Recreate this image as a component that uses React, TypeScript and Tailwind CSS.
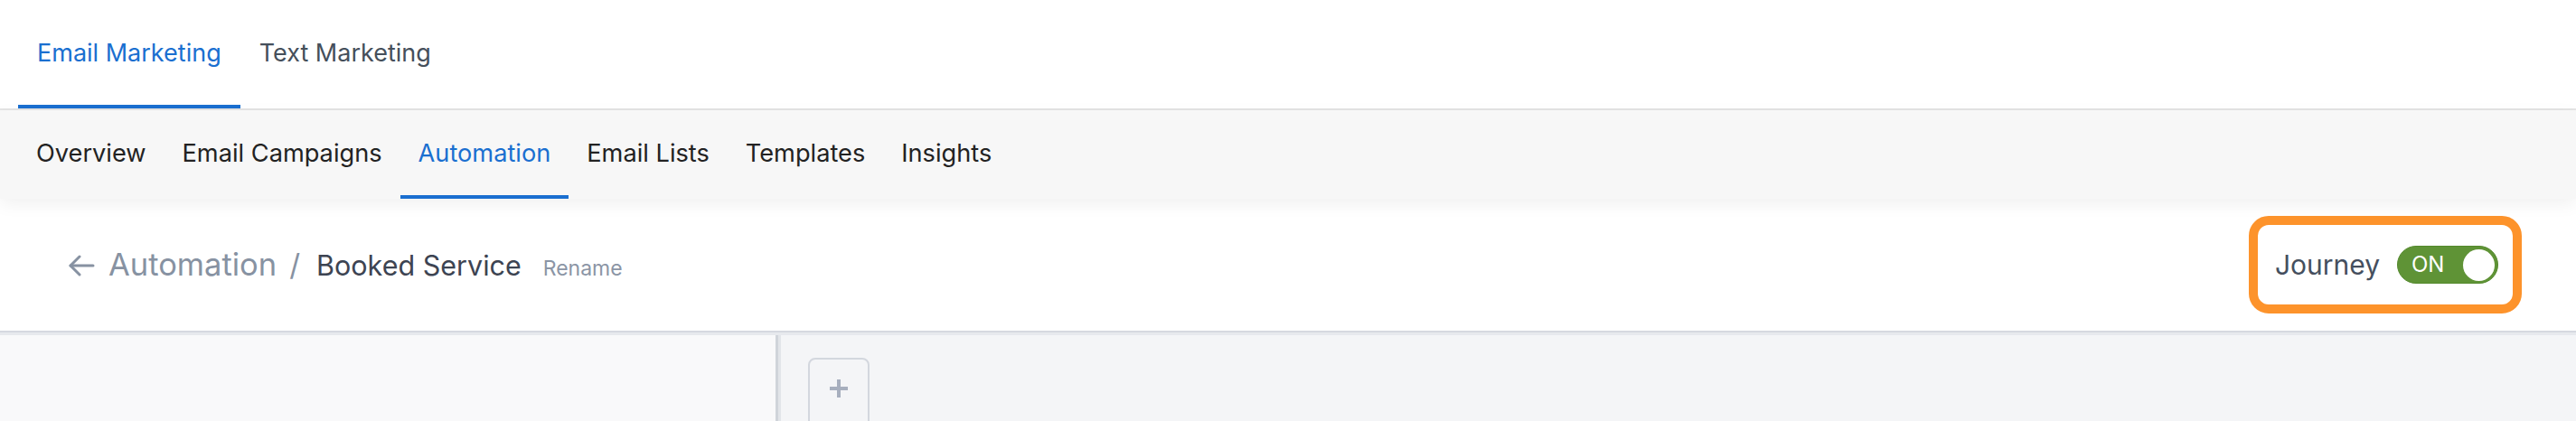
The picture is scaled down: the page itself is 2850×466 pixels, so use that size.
const topTabs = [
  { label: "Email Marketing", active: true },
  { label: "Text Marketing", active: false },
];

const subTabs = [
  { label: "Overview", active: false },
  { label: "Email Campaigns", active: false },
  { label: "Automation", active: true },
  { label: "Email Lists", active: false },
  { label: "Templates", active: false },
  { label: "Insights", active: false },
];

export default function App() {
  return (
    <div className="w-[2850px] h-[466px] overflow-hidden bg-white font-['Inter',sans-serif] flex flex-col">
      {/* product tabs */}
      <div className="h-[122px] shrink-0 flex pl-[20px] border-b-2 border-[#e4e4e4]">
        {topTabs.map((t) => (
          <div
            key={t.label}
            className={`h-full flex items-center px-[21px] pt-[2px] text-[27px] border-b-4 ${
              t.active ? "border-[#1a6fd0] text-[#1a6fd0]" : "border-transparent text-[#454f5b]"
            }`}
          >
            {t.label}
          </div>
        ))}
      </div>

      {/* section tabs */}
      <div className="relative z-10 h-[98px] shrink-0 flex pl-[20px] bg-[#f7f7f7] shadow-[0_6px_18px_rgba(0,0,0,0.06)]">
        {subTabs.map((t) => (
          <div
            key={t.label}
            className={`h-full flex items-center px-[20px] pt-[2px] text-[27.2px] border-b-4 ${
              t.active ? "border-[#1a6fd0] text-[#1a6fd0]" : "border-transparent text-[#222222]"
            }`}
          >
            {t.label}
          </div>
        ))}
      </div>

      {/* page header */}
      <div className="h-[148px] shrink-0 flex items-center justify-between pl-[75px] pr-[60px] border-b-2 border-[#d6d9e0]">
        <div className="flex items-baseline">
          <svg
            width="30"
            height="24"
            viewBox="0 0 30 24"
            className="self-center mr-[15px] mt-[2px]"
            fill="none"
            stroke="#8792a2"
            strokeWidth="3"
            strokeLinecap="round"
            strokeLinejoin="round"
          >
            <path d="M28 12H3" />
            <path d="M13 2L3 12l10 10" />
          </svg>
          <span className="text-[34.5px] text-[#8792a2]">Automation</span>
          <span className="text-[33px] text-[#8792a2] ml-[14px] mr-[18px]">/</span>
          <span className="text-[30.5px] text-[#3d4452]">Booked Service</span>
          <span className="text-[23px] text-[#8b95a5] ml-[24px]">Rename</span>
        </div>
        <div className="flex items-center gap-[19px] border-[10px] border-[#fd932b] rounded-[22px] h-[108px] pl-[19px] pr-[16px]">
          <span className="text-[30px] text-[#454f5e]">Journey</span>
          <div className="w-[112px] h-[42px] rounded-full bg-[#5f9336] border border-[#548a2d] flex items-center justify-between pl-[15px] pr-[3px]">
            <span className="text-[24px] text-white leading-none">ON</span>
            <span className="w-[35px] h-[35px] rounded-full bg-white" />
          </div>
        </div>
      </div>

      {/* builder */}
      <div className="flex-1 flex border-t-[3px] border-[#e7e9ed]">
        <div className="w-[858px] bg-[#f9f9fa]" />
        <div className="w-[6px] flex">
          <div className="w-[3px] bg-[#d0d4da]" />
          <div className="w-[3px] bg-[#e2e5e9]" />
        </div>
        <div className="flex-1 bg-[#f4f5f7] pl-[30px] pt-[25px]">
          <div className="w-[68px] h-[80px] border-2 border-[#d3d7de] rounded-[8px] flex items-start justify-center pt-[22px]">
            <svg width="20" height="20" viewBox="0 0 20 20" fill="#a7afbe">
              <rect x="8" y="0" width="4" height="20" />
              <rect x="0" y="8" width="20" height="4" />
            </svg>
          </div>
        </div>
      </div>
    </div>
  );
}
